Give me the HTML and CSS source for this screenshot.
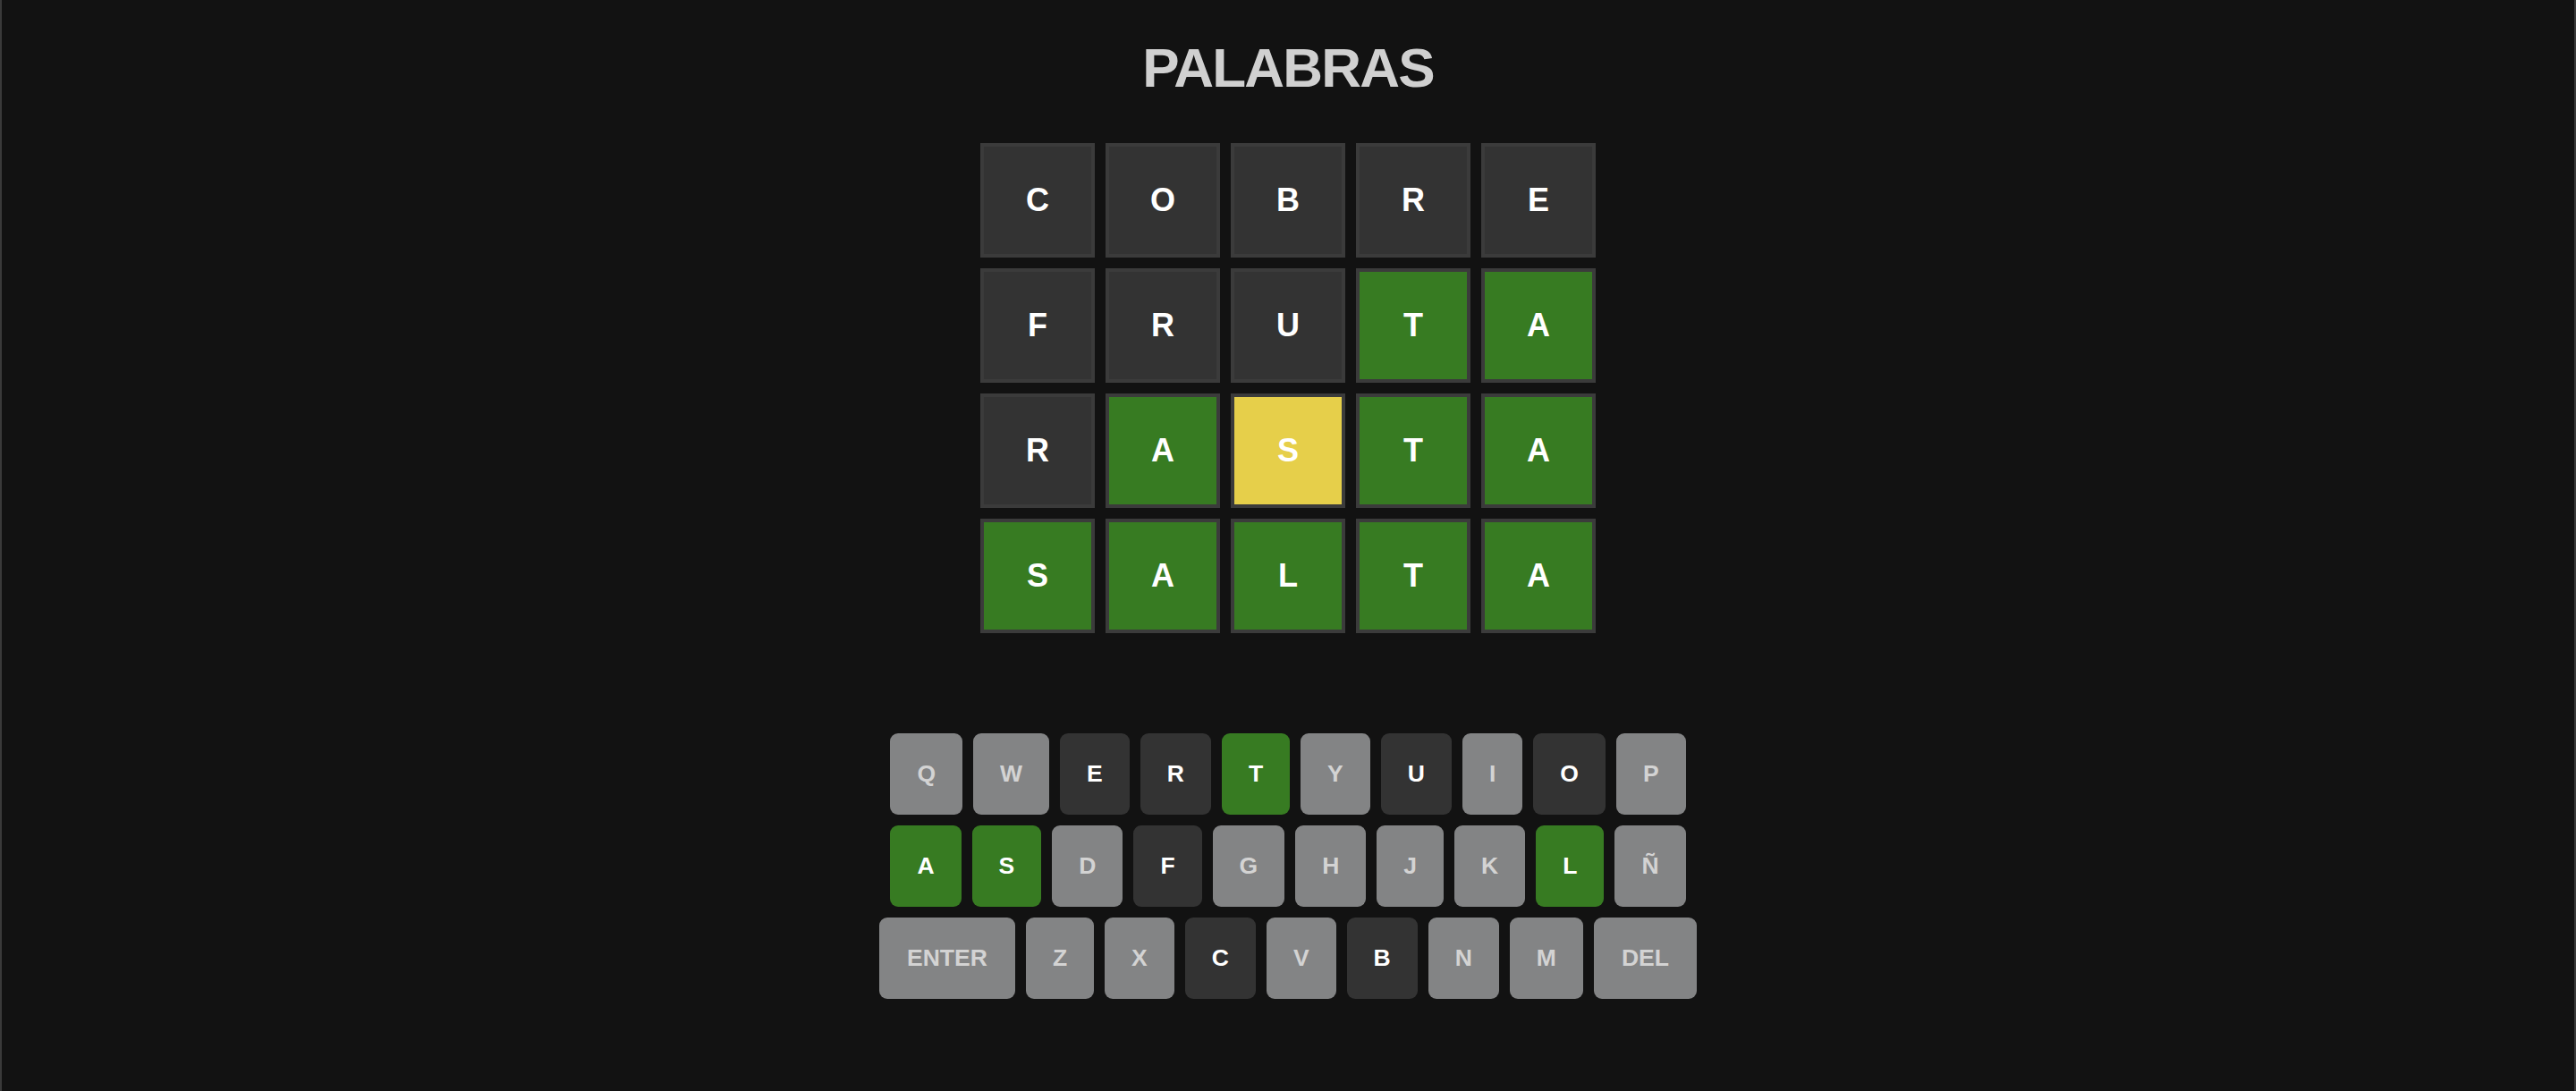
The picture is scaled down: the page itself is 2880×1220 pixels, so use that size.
FILE: index.html
```html
<!DOCTYPE html>
<html lang="es">
<head>
<meta charset="utf-8">
<title>Palabras</title>
<link rel="stylesheet" href="styles.css">
</head>
<body>
<div class="app">
  <h1 class="title">PALABRAS</h1>
  <div class="board">
    <div class="row">
      <div class="tile absent">C</div><div class="tile absent">O</div><div class="tile absent">B</div><div class="tile absent">R</div><div class="tile absent">E</div>
    </div>
    <div class="row">
      <div class="tile absent">F</div><div class="tile absent">R</div><div class="tile absent">U</div><div class="tile correct">T</div><div class="tile correct">A</div>
    </div>
    <div class="row">
      <div class="tile absent">R</div><div class="tile correct">A</div><div class="tile present">S</div><div class="tile correct">T</div><div class="tile correct">A</div>
    </div>
    <div class="row">
      <div class="tile correct">S</div><div class="tile correct">A</div><div class="tile correct">L</div><div class="tile correct">T</div><div class="tile correct">A</div>
    </div>
  </div>
  <div class="keyboard">
    <div class="krow">
      <button class="key">Q</button><button class="key">W</button><button class="key used">E</button><button class="key used">R</button><button class="key hit">T</button><button class="key">Y</button><button class="key used">U</button><button class="key">I</button><button class="key used">O</button><button class="key">P</button>
    </div>
    <div class="krow">
      <button class="key hit">A</button><button class="key hit">S</button><button class="key">D</button><button class="key used">F</button><button class="key">G</button><button class="key">H</button><button class="key">J</button><button class="key">K</button><button class="key hit">L</button><button class="key">Ñ</button>
    </div>
    <div class="krow">
      <button class="key wide">ENTER</button><button class="key">Z</button><button class="key">X</button><button class="key used">C</button><button class="key">V</button><button class="key used">B</button><button class="key">N</button><button class="key">M</button><button class="key wide">DEL</button>
    </div>
  </div>
</div>
</body>
</html>
```
FILE: styles.css
```css
* { box-sizing: border-box; }
html, body { margin: 0; padding: 0; background: #121212; }
body { font-family: "Liberation Sans", Arial, sans-serif; }
.app {
  height: 1220px;
  border-left: 2px solid #3a3a3a;
  border-right: 2px solid #3a3a3a;
  display: flex;
  flex-direction: column;
  align-items: center;
  padding-top: 40px;
}
.title {
  margin: 0;
  font-size: 62px;
  line-height: 72px;
  font-weight: 700;
  letter-spacing: -1.8px;
  color: #d0d0d0;
}
.board {
  margin-top: 48px;
  display: flex;
  flex-direction: column;
  gap: 12px;
}
.row { display: flex; gap: 12px; }
.tile {
  width: 128px;
  height: 128px;
  border: 4px solid #3b3b3b;
  display: flex;
  align-items: center;
  justify-content: center;
  color: #ffffff;
  font-size: 36px;
  font-weight: 700;
}
.absent { background: #333333; }
.correct { background: #377b22; }
.present { background: #e6cf4a; }
.keyboard {
  margin-top: 112px;
  display: flex;
  flex-direction: column;
  align-items: center;
  gap: 12px;
}
.krow { display: flex; gap: 12px; }
.key {
  height: 91px;
  padding: 0 30px;
  border: none;
  border-radius: 9px;
  background: #838485;
  color: #d3d3d3;
  font-family: "Liberation Sans", Arial, sans-serif;
  font-size: 26.5px;
  font-weight: 700;
  line-height: 1;
}
.key.wide { padding: 0 31px; }
.key.used { background: #333333; color: #ffffff; }
.key.hit { background: #377b22; color: #ffffff; }
```
